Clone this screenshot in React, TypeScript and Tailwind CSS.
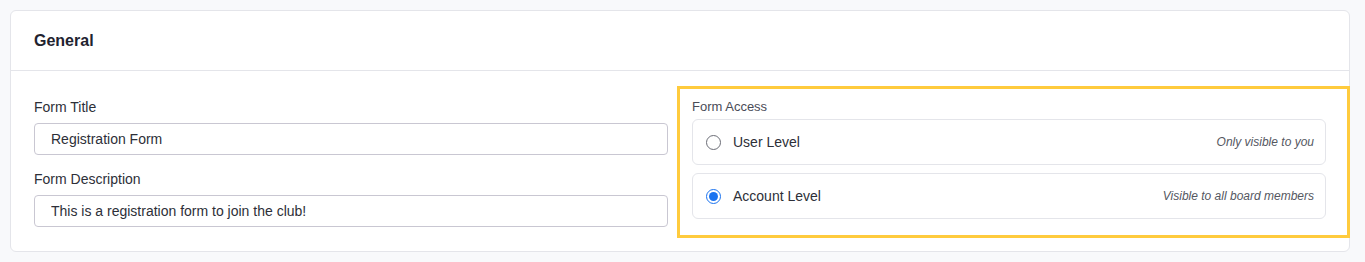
import { useState } from 'react'

const ACCESS_OPTIONS = [
  { id: 'user', label: 'User Level', hint: 'Only visible to you' },
  { id: 'account', label: 'Account Level', hint: 'Visible to all board members' },
]

export default function App() {
  const [title, setTitle] = useState('Registration Form')
  const [description, setDescription] = useState('This is a registration form to join the club!')
  const [access, setAccess] = useState('account')

  return (
    <div
      className="min-h-[262px] bg-[#f8f9fb] pt-[10px] pl-[10px] pr-[15px] pb-[10px]"
      style={{ fontFamily: '"Liberation Sans", Arial, sans-serif' }}
    >
      <div className="bg-white border border-[#e4e5ea] rounded-md">
        {/* header */}
        <div className="h-[60px] px-[23px] flex items-center border-b border-[#e4e5ea]">
          <h2 className="text-[16px] font-bold text-[#1f2330]">General</h2>
        </div>

        {/* body */}
        <div className="grid grid-cols-2 gap-6 px-[23px] pt-[26px] pb-[24px]">
          <div>
            <label className="block text-[14px] leading-5 text-[#2d2f38]">Form Title</label>
            <input
              value={title}
              onChange={(e) => setTitle(e.target.value)}
              className="mt-[6px] w-full h-[32px] px-4 text-[14px] text-[#2d2f38] border border-[#c9c7d2] rounded-[4px] outline-none"
            />
            <label className="block mt-[14px] text-[14px] leading-5 text-[#2d2f38]">Form Description</label>
            <input
              value={description}
              onChange={(e) => setDescription(e.target.value)}
              className="mt-[6px] w-full h-[32px] px-4 text-[14px] text-[#2d2f38] border border-[#c9c7d2] rounded-[4px] outline-none"
            />
          </div>

          <div className="relative">
            {/* highlight frame */}
            <div className="absolute -left-[15px] -right-[24px] -top-[11px] -bottom-[11px] border-[3px] border-[#ffcb3d] pointer-events-none" />
            <div className="text-[13px] leading-5 text-[#4a4c57]">Form Access</div>
            <div className="mt-[2px] flex flex-col gap-[8px]">
              {ACCESS_OPTIONS.map((opt) => {
                const checked = access === opt.id
                return (
                  <label
                    key={opt.id}
                    onClick={() => setAccess(opt.id)}
                    className="h-[46px] flex items-center pl-[13px] pr-[11px] border border-[#e4e5ea] rounded-md cursor-pointer"
                  >
                    <span
                      className={`w-[15px] h-[15px] rounded-full flex items-center justify-center flex-shrink-0 border ${
                        checked ? 'border-[#1a73f0] border-[1.5px]' : 'border-[#6b6d76]'
                      }`}
                    >
                      {checked && <span className="w-[9px] h-[9px] rounded-full bg-[#1a73f0]" />}
                    </span>
                    <span className="ml-[12px] text-[14px] text-[#2d2f38]">{opt.label}</span>
                    <span className="ml-auto text-[12px] italic text-[#55575f]">{opt.hint}</span>
                  </label>
                )
              })}
            </div>
          </div>
        </div>
      </div>
    </div>
  )
}
